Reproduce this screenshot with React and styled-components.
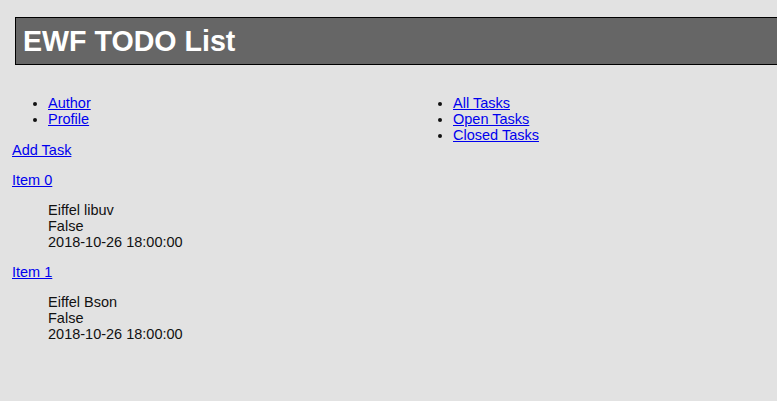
import React from 'react';
import styled, { createGlobalStyle } from 'styled-components';

const GlobalStyle = createGlobalStyle`
  html, body {
    margin: 0;
    padding: 0;
    background: #e2e2e2;
    overflow-x: hidden;
  }
  body {
    font-family: "Liberation Sans", Arial, sans-serif;
    font-size: 14.5px;
    line-height: 16px;
    color: #111;
  }
`;

const Page = styled.div`
  padding: 17px 0 40px 12px;
`;

const Header = styled.header`
  margin: 0 -20px 0 3px;
  height: 46px;
  background: #666666;
  border: 1px solid #000;
  display: flex;
  align-items: center;
  padding-left: 7px;
`;

const Title = styled.h1`
  margin: 0;
  color: #fff;
  font-size: 28.6px;
  line-height: 32px;
  font-weight: bold;
`;

const Columns = styled.div`
  display: grid;
  grid-template-columns: 405px 1fr;
  margin-top: 30px;
`;

const Menu = styled.ul`
  margin: 0;
  padding-left: 36px;
  list-style: disc;
`;

const Link = styled.a`
  color: #0000ee;
  text-decoration: underline;
  cursor: pointer;
`;

const Block = styled.p`
  margin: ${(p) => (p.$first ? '15px' : '14px')} 0 0;
`;

const Details = styled.div`
  margin-top: 14px;
  padding-left: 36px;
`;

const tasks = [
  { name: 'Item 0', title: 'Eiffel libuv', done: 'False', date: '2018-10-26 18:00:00' },
  { name: 'Item 1', title: 'Eiffel Bson', done: 'False', date: '2018-10-26 18:00:00' },
];

export default function App() {
  return (
    <>
      <GlobalStyle />
      <Page>
        <Header>
          <Title>EWF TODO List</Title>
        </Header>
        <Columns>
          <div>
            <Menu>
              <li><Link href="#">Author</Link></li>
              <li><Link href="#">Profile</Link></li>
            </Menu>
            <Block $first><Link href="#">Add Task</Link></Block>
            {tasks.map((t) => (
              <React.Fragment key={t.name}>
                <Block><Link href="#">{t.name}</Link></Block>
                <Details>
                  <div>{t.title}</div>
                  <div>{t.done}</div>
                  <div>{t.date}</div>
                </Details>
              </React.Fragment>
            ))}
          </div>
          <div>
            <Menu>
              <li><Link href="#">All Tasks</Link></li>
              <li><Link href="#">Open Tasks</Link></li>
              <li><Link href="#">Closed Tasks</Link></li>
            </Menu>
          </div>
        </Columns>
      </Page>
    </>
  );
}
